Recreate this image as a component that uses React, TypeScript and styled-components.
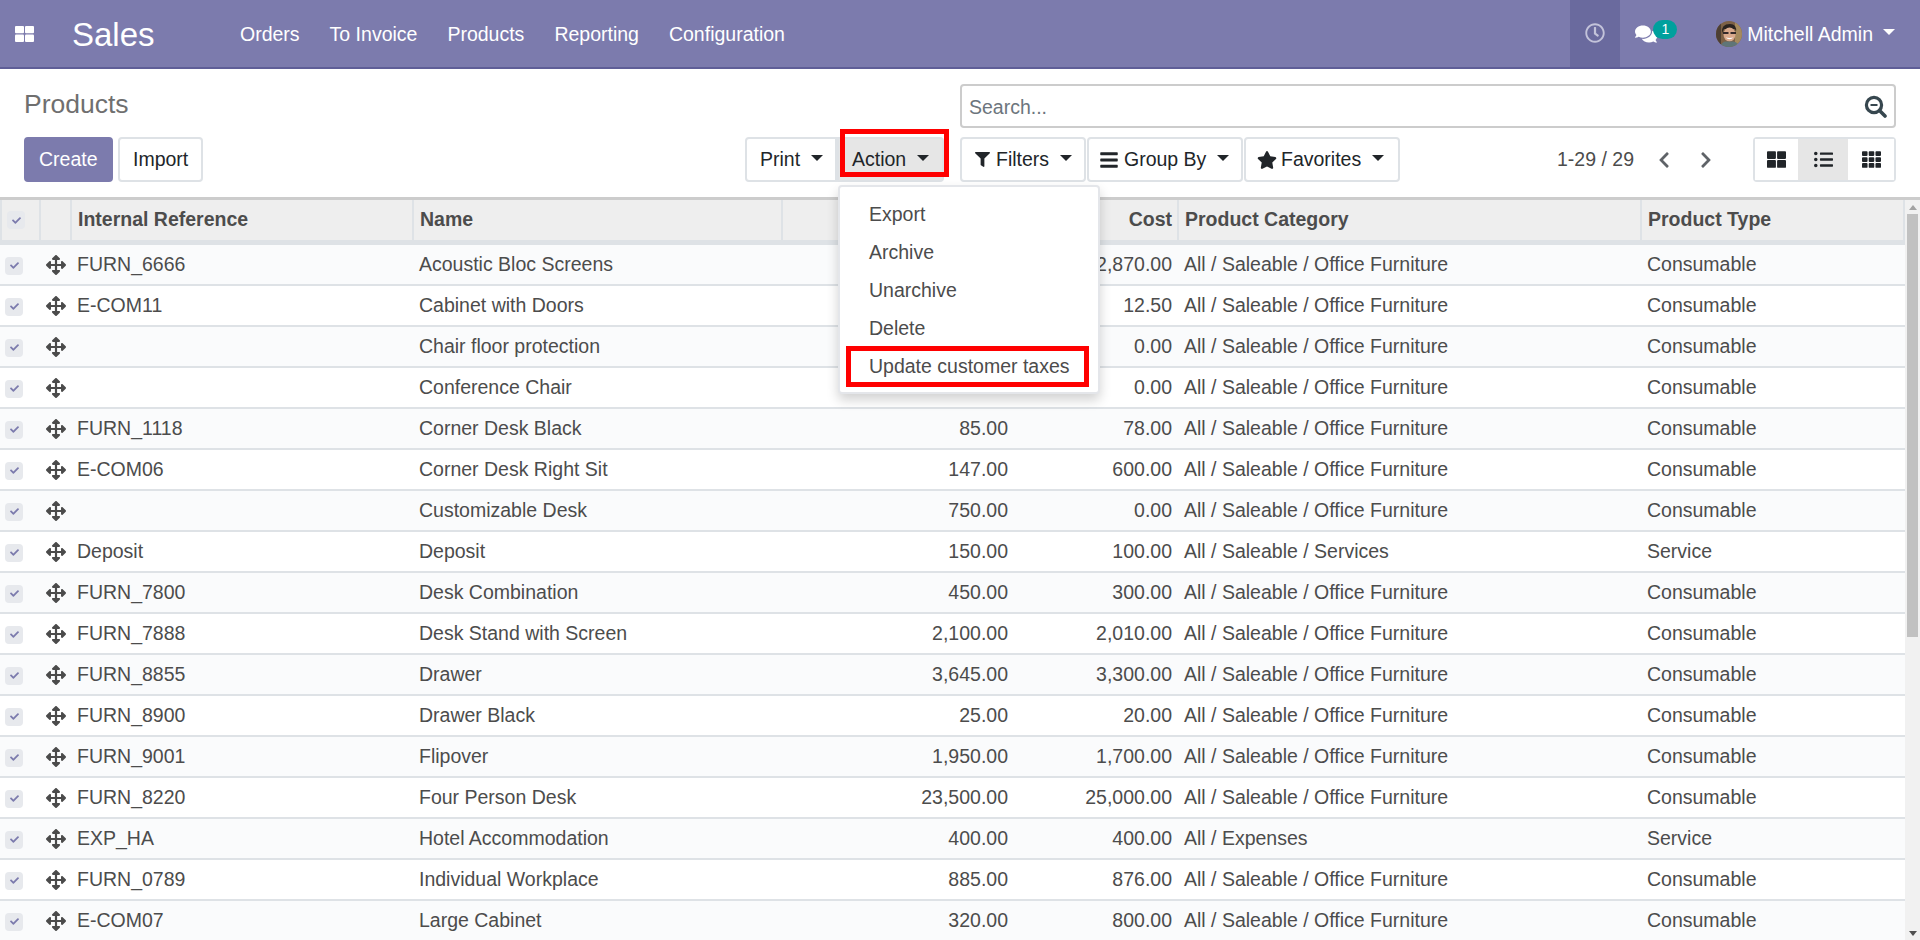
import React from "react";
import styled, { createGlobalStyle } from "styled-components";
import {
  FaArrowsAlt,
  FaBars,
  FaCheck,
  FaChevronLeft,
  FaChevronRight,
  FaComments,
  FaFilter,
  FaListUl,
  FaRegClock,
  FaStar,
  FaTh,
  FaThLarge,
} from "react-icons/fa";

const BRAND = "#7c7bad";
const BORDER = "#dee2e6";
const TEXT = "#4c4c4c";

const GlobalStyle = createGlobalStyle`
  html, body {
    margin: 0;
    height: 100%;
    overflow: hidden;
  }
  body {
    font-family: "Liberation Sans", Arial, sans-serif;
    font-size: 19.5px;
    color: ${TEXT};
    background: #fff;
  }
`;

const NAV_ITEMS = ["Orders", "To Invoice", "Products", "Reporting", "Configuration"];

const OFFICE = "All / Saleable / Office Furniture";

type Row = [string, string, string, string, string, string];

// sales price of the first four rows sits behind the open menu
const ROWS: Row[] = [
  ["FURN_6666", "Acoustic Bloc Screens", "", "2,870.00", OFFICE, "Consumable"],
  ["E-COM11", "Cabinet with Doors", "", "12.50", OFFICE, "Consumable"],
  ["", "Chair floor protection", "", "0.00", OFFICE, "Consumable"],
  ["", "Conference Chair", "", "0.00", OFFICE, "Consumable"],
  ["FURN_1118", "Corner Desk Black", "85.00", "78.00", OFFICE, "Consumable"],
  ["E-COM06", "Corner Desk Right Sit", "147.00", "600.00", OFFICE, "Consumable"],
  ["", "Customizable Desk", "750.00", "0.00", OFFICE, "Consumable"],
  ["Deposit", "Deposit", "150.00", "100.00", "All / Saleable / Services", "Service"],
  ["FURN_7800", "Desk Combination", "450.00", "300.00", OFFICE, "Consumable"],
  ["FURN_7888", "Desk Stand with Screen", "2,100.00", "2,010.00", OFFICE, "Consumable"],
  ["FURN_8855", "Drawer", "3,645.00", "3,300.00", OFFICE, "Consumable"],
  ["FURN_8900", "Drawer Black", "25.00", "20.00", OFFICE, "Consumable"],
  ["FURN_9001", "Flipover", "1,950.00", "1,700.00", OFFICE, "Consumable"],
  ["FURN_8220", "Four Person Desk", "23,500.00", "25,000.00", OFFICE, "Consumable"],
  ["EXP_HA", "Hotel Accommodation", "400.00", "400.00", "All / Expenses", "Service"],
  ["FURN_0789", "Individual Workplace", "885.00", "876.00", OFFICE, "Consumable"],
  ["E-COM07", "Large Cabinet", "320.00", "800.00", OFFICE, "Consumable"],
];

const ACTIONS = ["Export", "Archive", "Unarchive", "Delete", "Update customer taxes"];

const COLUMN_WIDTHS = [41, 31, 342, 369, 232, 164, 463, 263];

const Page = styled.div`
  height: 940px;
  display: flex;
  flex-direction: column;
  overflow: hidden;
`;

const NavBar = styled.header`
  height: 69px;
  flex-shrink: 0;
  box-sizing: border-box;
  border-bottom: 2px solid #5f5e97;
  background: ${BRAND};
  color: #fff;
  display: flex;
  align-items: stretch;
`;

const AppsButton = styled.div`
  width: 72px;
  padding: 1px 0 0 15px;
  box-sizing: border-box;
  display: flex;
  align-items: center;
`;

const Brand = styled.div`
  width: 168px;
  padding-top: 2px;
  font-size: 33px;
  display: flex;
  align-items: center;
  flex-shrink: 0;
`;

const NavMenu = styled.nav`
  padding-top: 2px;
  display: flex;
  align-items: center;
  gap: 30px;
  flex: 1;
`;

const NavLink = styled.span`
  font-size: 19.5px;
`;

const Systray = styled.div`
  display: flex;
  align-items: stretch;
  padding-right: 25px;
`;

const ActivityButton = styled.div`
  width: 50px;
  padding-bottom: 1px;
  background: #6a6a9e;
  color: #c3c3da;
  display: flex;
  align-items: center;
  justify-content: center;
  font-size: 20px;
`;

const ChatButton = styled.div`
  position: relative;
  width: 96px;
  padding: 0 0 0 15px;
  box-sizing: border-box;
  display: flex;
  align-items: center;
  font-size: 22px;
`;

const Badge = styled.span`
  position: absolute;
  left: 33px;
  top: 20px;
  width: 24px;
  height: 19px;
  border-radius: 10px;
  background: #00a09d;
  color: #fff;
  font-size: 14px;
  line-height: 19px;
  text-align: center;
`;

const UserMenu = styled.div`
  display: flex;
  align-items: center;
  gap: 5px;
`;

const UserName = styled.span`
  font-size: 19.5px;
  padding-top: 2px;
`;

const Caret = styled.span<{ $light?: boolean }>`
  display: inline-block;
  width: 0;
  height: 0;
  margin-left: 5px;
  border-top: 6px solid ${(p) => (p.$light ? "#fff" : "#212529")};
  border-left: 6px solid transparent;
  border-right: 6px solid transparent;
  position: relative;
  top: -2px;
`;

const ControlPanel = styled.section`
  height: 128px;
  flex-shrink: 0;
  box-sizing: border-box;
  padding: 15px 24px 0 24px;
  display: grid;
  grid-template-columns: 920px 1fr;
  grid-template-rows: 44px 45px;
  column-gap: 16px;
  row-gap: 9px;
`;

const Title = styled.h1`
  margin: 0;
  font-size: 26.5px;
  font-weight: 400;
  line-height: 40px;
  color: #6f6f6f;
`;

const SearchBox = styled.div`
  box-sizing: border-box;
  height: 44px;
  border: 2px solid #cccccc;
  border-radius: 4px;
  padding: 0 7px;
  display: flex;
  align-items: center;
  justify-content: space-between;
`;

const Placeholder = styled.span`
  color: #6c757d;
  font-size: 19.5px;
  padding-top: 2px;
`;

const LeftTools = styled.div`
  display: flex;
  align-items: stretch;
  justify-content: space-between;
`;

const ButtonRow = styled.div`
  display: flex;
  align-items: stretch;
  gap: 5px;
`;

const JoinedGroup = styled.div`
  display: flex;
  align-items: stretch;
`;

const RightTools = styled.div`
  display: flex;
  align-items: stretch;
`;

const FilterBar = styled.div`
  display: flex;
  align-items: stretch;
  gap: 1px;
`;

const Btn = styled.button<{ $primary?: boolean; $active?: boolean; $width: number; $joined?: "left" | "right" }>`
  box-sizing: border-box;
  height: 45px;
  width: ${(p) => p.$width}px;
  padding: 0 0 0 13px;
  font: inherit;
  font-size: 19.5px;
  color: ${(p) => (p.$primary ? "#fff" : "#212529")};
  background: ${(p) => (p.$primary ? BRAND : p.$active ? "#e6e6e6" : "#fff")};
  border: 2px solid ${(p) => (p.$primary ? BRAND : BORDER)};
  border-radius: ${(p) => (p.$joined === "left" ? "4px 0 0 4px" : p.$joined === "right" ? "0 4px 4px 0" : "4px")};
  display: flex;
  align-items: center;
  gap: 6px;
`;

const BarsIcon = styled(FaBars)`
  margin: 0 -1px 0 -3px;
  font-size: 20px;
`;

const StarIcon = styled(FaStar)`
  margin: 0 -2px 0 -2px;
  font-size: 20px;
`;

const Pager = styled.div`
  margin-left: auto;
  display: flex;
  align-items: center;
  color: ${TEXT};
  font-size: 19.5px;
`;

const PagerLabel = styled.span`
  margin-right: 9px;
`;

const PagerButton = styled.span`
  width: 42px;
  display: flex;
  justify-content: center;
  color: #5f6368;
  font-size: 18px;
`;

const ViewSwitch = styled.div`
  margin-left: 26px;
  display: flex;
  box-sizing: border-box;
  height: 45px;
  border: 2px solid ${BORDER};
  border-radius: 4px;
`;

const ViewButton = styled.span<{ $active?: boolean; $width: number }>`
  width: ${(p) => p.$width}px;
  display: flex;
  align-items: center;
  justify-content: center;
  background: ${(p) => (p.$active ? "#e6e6e6" : "#fff")};
  color: #212529;
  font-size: 19px;
`;

const Content = styled.main`
  flex: 1;
  min-height: 0;
  display: flex;
  border-top: 3px solid #cccccc;
  overflow: hidden;
`;

const TableWrap = styled.div`
  flex: 1;
  min-width: 0;
`;

const Table = styled.table`
  width: 1905px;
  table-layout: fixed;
  border-collapse: separate;
  border-spacing: 0;
`;

const HeadCell = styled.th<{ $align?: string }>`
  height: 45px;
  box-sizing: border-box;
  padding: 0 5px 2px 6px;
  background: #eeeeee;
  border-right: 2px solid ${BORDER};
  border-bottom: 5px solid ${BORDER};
  text-align: ${(p) => p.$align || "left"};
  font-size: 19.5px;
  font-weight: 700;
  color: ${TEXT};
  white-space: nowrap;
  &:first-child {
    border-left: 2px solid ${BORDER};
    padding-left: 5px;
  }
`;

const BodyRow = styled.tr`
  &:nth-child(odd) {
    background: #fafbfc;
  }
`;

const Cell = styled.td<{ $align?: string }>`
  height: 41px;
  box-sizing: border-box;
  padding: 0 7px 0 5px;
  border-bottom: 2px solid ${BORDER};
  text-align: ${(p) => p.$align || "left"};
  font-size: 19.5px;
  color: ${TEXT};
  white-space: nowrap;
  overflow: hidden;
`;

const CheckBox = styled.span`
  width: 18px;
  height: 18px;
  border-radius: 4px;
  background: #e7e9ed;
  color: #7c7bad;
  font-size: 9px;
  display: inline-flex;
  align-items: center;
  justify-content: center;
  vertical-align: middle;
`;

const HandleIcon = styled(FaArrowsAlt)`
  display: block;
  font-size: 20px;
  color: #4b4b4b;
`;

const ScrollBar = styled.aside`
  width: 15px;
  flex-shrink: 0;
  background: #f1f1f1;
  display: flex;
  flex-direction: column;
  align-items: center;
  justify-content: space-between;
  padding: 0 2px;
  box-sizing: border-box;
`;

const ScrollArrow = styled.span<{ $down?: boolean }>`
  width: 0;
  height: 0;
  margin: 5px 0 4px;
  border-left: 4px solid transparent;
  border-right: 4px solid transparent;
  ${(p) => (p.$down ? "border-top: 5px solid #505050;" : "border-bottom: 5px solid #a3a3a3;")}
`;

const ScrollThumb = styled.div`
  width: 11px;
  height: 423px;
  background: #c1c1c1;
`;

const ScrollTop = styled.div`
  display: flex;
  flex-direction: column;
  align-items: center;
`;

const Menu = styled.div`
  position: absolute;
  left: 838px;
  top: 185px;
  width: 262px;
  height: 209px;
  box-sizing: border-box;
  padding: 8px 0;
  background: #fff;
  border: 2px solid #e4e6ea;
  border-radius: 4px;
  box-shadow: 0 6px 12px rgba(0, 0, 0, 0.18);
`;

const MenuItem = styled.div`
  height: 38px;
  line-height: 38px;
  padding-left: 29px;
  font-size: 19.5px;
  color: ${TEXT};
`;

const Highlight = styled.div<{ $left: number; $top: number; $width: number; $height: number }>`
  position: absolute;
  left: ${(p) => p.$left}px;
  top: ${(p) => p.$top}px;
  width: ${(p) => p.$width}px;
  height: ${(p) => p.$height}px;
  box-sizing: border-box;
  border: 5px solid #ff0000;
  pointer-events: none;
`;

const Avatar = () => (
  <svg width="26" height="26" viewBox="0 0 26 26">
    <defs>
      <clipPath id="avatar-clip">
        <circle cx="13" cy="13" r="13" />
      </clipPath>
    </defs>
    <g clipPath="url(#avatar-clip)">
      <rect width="26" height="26" fill="#7d6146" />
      <rect x="19" width="7" height="26" fill="#a58a5e" />
      <rect width="5" height="26" fill="#4d3f33" />
      <path d="M6 12 Q5 3 14 3 Q21 3 20 11 L19 8 L8 8 Z" fill="#2a2320" />
      <ellipse cx="13.5" cy="13.5" rx="6" ry="7" fill="#d9a98c" />
      <path d="M7 11 h5.5 v2 H7 Z M14.5 11 H20 v2 h-5.5 Z" fill="#33292a" />
      <path d="M9.5 16.5 Q13.5 20 17.5 16.5 Q13.5 17.4 9.5 16.5 Z" fill="#fff" />
      <path d="M4 26 Q6 20.5 10 20.5 L17 20.5 Q22 21 24 26 Z" fill="#5f7577" />
    </g>
  </svg>
);

const SearchIcon = () => (
  <svg width="23" height="23" viewBox="0 0 23 23" fill="none" stroke="#37474f">
    <circle cx="10" cy="10" r="7.6" strokeWidth="3.2" />
    <path d="M15.5 15.5 L21 21" strokeWidth="3.6" strokeLinecap="round" />
    <path d="M6.5 10 H13.5" strokeWidth="2" />
  </svg>
);

const AppsIcon = () => (
  <svg width="19" height="16" viewBox="0 0 19 16" fill="#fff">
    <rect x="0" y="0" width="9" height="7.2" rx="1" />
    <rect x="10" y="0" width="9" height="7.2" rx="1" />
    <rect x="0" y="8.5" width="9" height="7.5" rx="1" />
    <rect x="10" y="8.5" width="9" height="7.5" rx="1" />
  </svg>
);

export default function App() {
  return (
    <Page>
      <GlobalStyle />
      <NavBar>
        <AppsButton>
          <AppsIcon />
        </AppsButton>
        <Brand>Sales</Brand>
        <NavMenu>
          {NAV_ITEMS.map((item) => (
            <NavLink key={item}>{item}</NavLink>
          ))}
        </NavMenu>
        <Systray>
          <ActivityButton>
            <FaRegClock />
          </ActivityButton>
          <ChatButton>
            <FaComments />
            <Badge>1</Badge>
          </ChatButton>
          <UserMenu>
            <Avatar />
            <UserName>Mitchell Admin</UserName>
            <Caret $light />
          </UserMenu>
        </Systray>
      </NavBar>

      <ControlPanel>
        <Title>Products</Title>
        <SearchBox>
          <Placeholder>Search...</Placeholder>
          <SearchIcon />
        </SearchBox>
        <LeftTools>
          <ButtonRow>
            <Btn $primary $width={89}>
              Create
            </Btn>
            <Btn $width={85}>Import</Btn>
          </ButtonRow>
          <JoinedGroup>
            <Btn $width={92} $joined="left">
              Print <Caret />
            </Btn>
            <Btn $width={107} $active $joined="right">
              Action <Caret />
            </Btn>
          </JoinedGroup>
        </LeftTools>
        <RightTools>
          <FilterBar>
            <Btn $width={126}>
              <FaFilter size={15} /> Filters <Caret />
            </Btn>
            <Btn $width={156}>
              <BarsIcon /> Group By <Caret />
            </Btn>
            <Btn $width={156}>
              <StarIcon /> Favorites <Caret />
            </Btn>
          </FilterBar>
          <Pager>
            <PagerLabel>1-29 / 29</PagerLabel>
            <PagerButton>
              <FaChevronLeft />
            </PagerButton>
            <PagerButton>
              <FaChevronRight />
            </PagerButton>
          </Pager>
          <ViewSwitch>
            <ViewButton $width={43}>
              <FaThLarge />
            </ViewButton>
            <ViewButton $width={50} $active>
              <FaListUl />
            </ViewButton>
            <ViewButton $width={46}>
              <FaTh />
            </ViewButton>
          </ViewSwitch>
        </RightTools>
      </ControlPanel>

      <Content>
        <TableWrap>
          <Table>
            <colgroup>
              {COLUMN_WIDTHS.map((w, i) => (
                <col key={i} width={w} />
              ))}
            </colgroup>
            <thead>
              <tr>
                <HeadCell>
                  <CheckBox>
                    <FaCheck />
                  </CheckBox>
                </HeadCell>
                <HeadCell />
                <HeadCell>Internal Reference</HeadCell>
                <HeadCell>Name</HeadCell>
                <HeadCell />
                <HeadCell $align="right">Cost</HeadCell>
                <HeadCell>Product Category</HeadCell>
                <HeadCell>Product Type</HeadCell>
              </tr>
            </thead>
            <tbody>
              {ROWS.map((row) => (
                <BodyRow key={row[1]}>
                  <Cell>
                    <CheckBox>
                      <FaCheck />
                    </CheckBox>
                  </Cell>
                  <Cell>
                    <HandleIcon />
                  </Cell>
                  <Cell>{row[0]}</Cell>
                  <Cell>{row[1]}</Cell>
                  <Cell $align="right">{row[2]}</Cell>
                  <Cell $align="right">{row[3]}</Cell>
                  <Cell>{row[4]}</Cell>
                  <Cell>{row[5]}</Cell>
                </BodyRow>
              ))}
            </tbody>
          </Table>
        </TableWrap>
        <ScrollBar>
          <ScrollTop>
            <ScrollArrow />
            <ScrollThumb />
          </ScrollTop>
          <ScrollArrow $down />
        </ScrollBar>
      </Content>

      <Menu>
        {ACTIONS.map((item) => (
          <MenuItem key={item}>{item}</MenuItem>
        ))}
      </Menu>
      <Highlight $left={840} $top={129} $width={109} $height={48} />
      <Highlight $left={846} $top={346} $width={243} $height={41} />
    </Page>
  );
}
